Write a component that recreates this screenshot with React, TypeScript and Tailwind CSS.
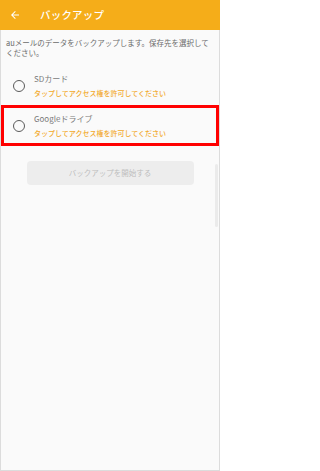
import { ReactNode } from "react";

const jp = { fontFamily: '"Noto Sans CJK JP", "Noto Sans", sans-serif' };

function Radio() {
  return (
    <span className="ml-[9px] h-[12px] w-[12px] shrink-0 rounded-full border-[1.5px] border-[#5a5a5a]" />
  );
}

function Option({ title, highlight }: { title: string; highlight?: boolean }) {
  return (
    <div
      className={
        highlight
          ? "flex h-[41px] items-center border-[3px] border-[#ff0000]"
          : "flex h-[40px] items-center border-[3px] border-transparent pt-[1px]"
      }
    >
      <Radio />
      <div className="ml-[9px] flex flex-col">
        <span className="text-[8px] leading-[14px] text-[#7a7a7a]">{title}</span>
        <span className="text-[7px] font-medium leading-[14px] text-[#f2a92a]">
          タップしてアクセス権を許可してください
        </span>
      </div>
    </div>
  );
}

function Frame({ children }: { children: ReactNode }) {
  return (
    <div className="relative flex h-[441px] flex-col border-x border-b border-[#dcdcdc] bg-[#fafafa]">
      {children}
    </div>
  );
}

export default function App() {
  return (
    <div className="h-[471px] w-[220px] overflow-hidden bg-[#fafafa]" style={jp}>
      <header className="flex h-[30px] items-center bg-[#f5ad19]">
        <svg viewBox="0 0 24 24" className="ml-[9px] h-[12px] w-[12px]" fill="#ffffff">
          <path d="M20 11H7.83l5.59-5.59L12 4l-8 8 8 8 1.41-1.41L7.83 13H20v-2z" />
        </svg>
        <h1 className="ml-[19px] text-[10.5px] font-medium tracking-[0.2px] text-white">
          バックアップ
        </h1>
      </header>

      <Frame>
        <p className="px-[5px] pt-[8px] text-[7.5px] leading-[9.5px] text-[#6b6b6b]">
          auメールのデータをバックアップします。保存先を選択してください。
        </p>

        <div className="mt-[8px]">
          <Option title="SDカード" />
          <Option title="Googleドライブ" highlight />
        </div>

        <button
          disabled
          className="mx-auto mt-[15px] flex h-[24px] w-[167px] items-center justify-center rounded-[4px] bg-[#ededed] text-[7.5px] text-[#bdbdbd]"
        >
          バックアップを開始する
        </button>

        <span className="absolute right-[1px] top-[134px] h-[63px] w-[3px] rounded-full bg-[#ebebeb]" />
      </Frame>
    </div>
  );
}
